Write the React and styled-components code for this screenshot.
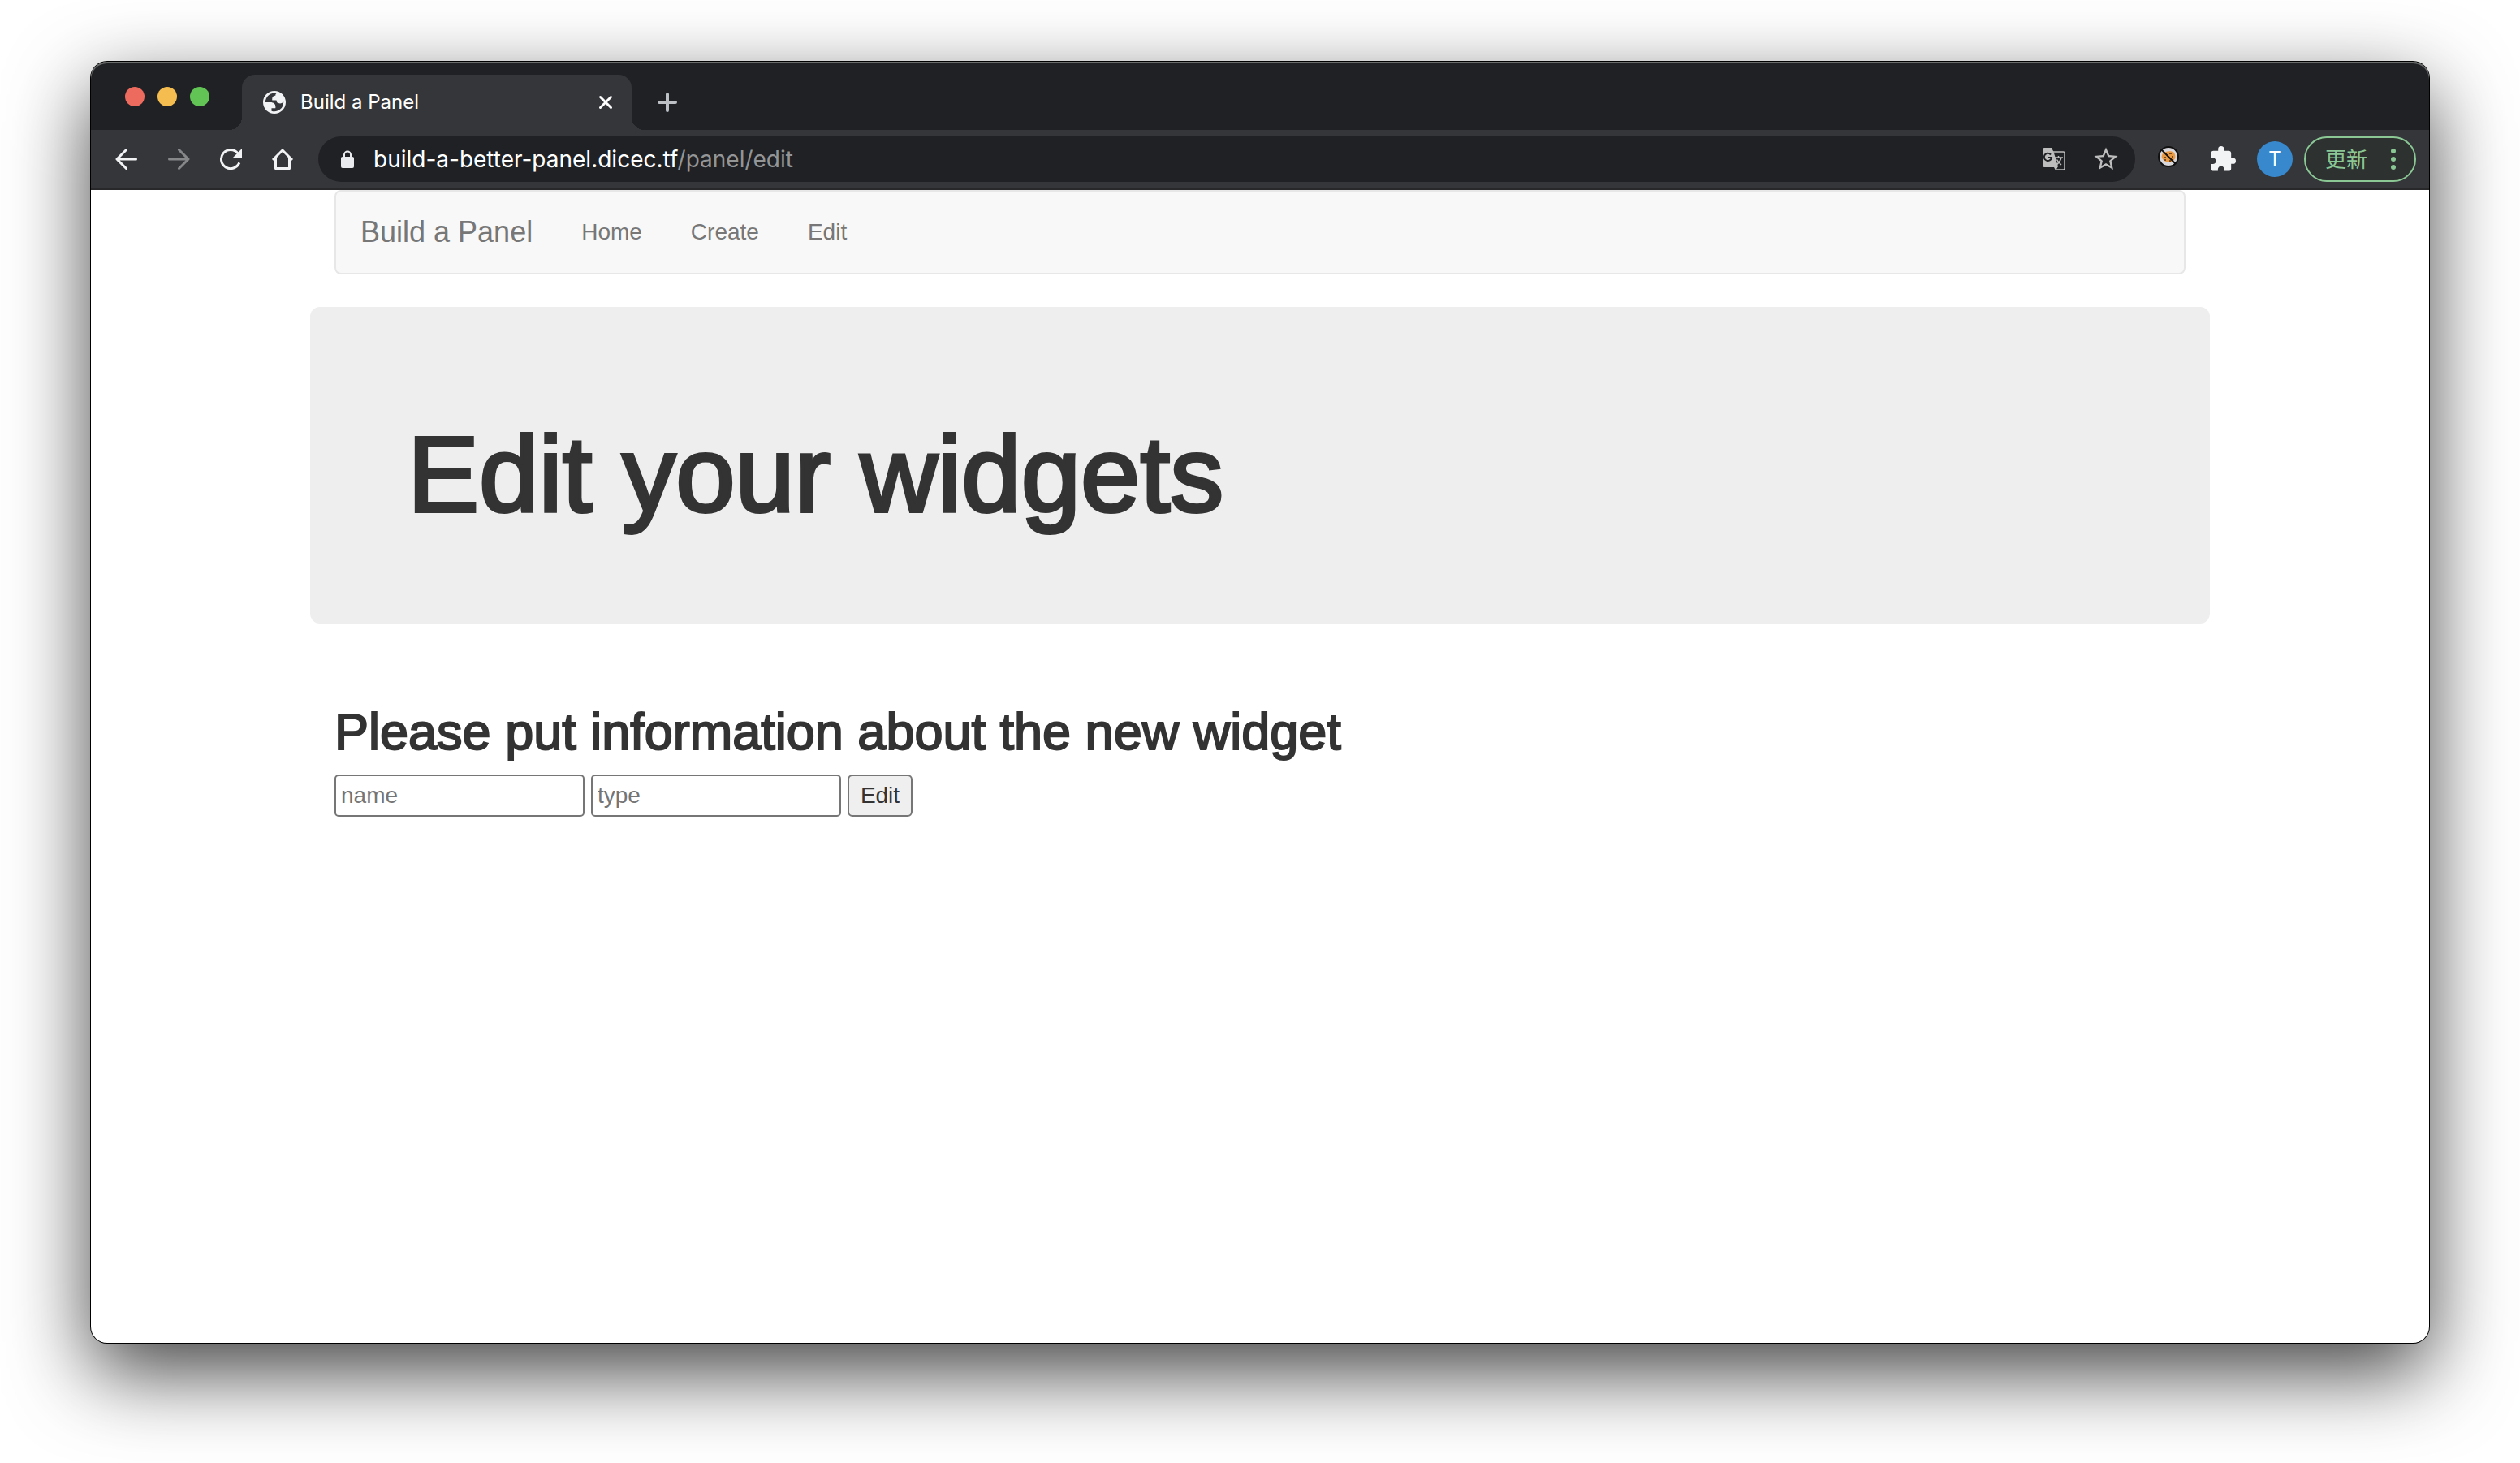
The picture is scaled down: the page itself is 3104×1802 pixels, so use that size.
import React from "react";
import styled, { createGlobalStyle } from "styled-components";

const ui = `Inter, "Noto Sans CJK TC", sans-serif`;
const body = `"Liberation Sans", Arial, sans-serif`;

const GlobalStyle = createGlobalStyle`
  *, *::before, *::after { box-sizing: border-box; }
  body { margin: 0; background: #fff; }
  button { font: inherit; }
`;

const Desktop = styled.div`
  display: flex;
  min-height: 100vh;
  padding: 76px 112px 148px;
`;

const BrowserWindow = styled.div`
  flex: 1;
  display: flex;
  flex-direction: column;
  min-width: 0;
  overflow: hidden;
  border-radius: 20px;
  background: #fff;
  box-shadow: 0 0 0 1px #000, 0 36px 100px rgba(0, 0, 0, 0.74);
`;

const Chrome = styled.header`
  display: flex;
  flex-direction: column;
  border-radius: 20px 20px 0 0;
  border-bottom: 2px solid #28282a;
  background: #35363a;
  font-family: ${ui};
`;

const TabStrip = styled.div`
  display: flex;
  align-items: stretch;
  height: 84px;
  padding: 16px 42px 0;
  border-radius: 20px 20px 0 0;
  background: #202124;
  box-shadow: inset 0 2px 0 #6a6c6b;
`;

const TrafficLights = styled.div`
  display: flex;
  gap: 16px;
  padding-top: 15px;
  margin-right: 40px;
`;

const Light = styled.button`
  width: 24px;
  height: 24px;
  padding: 0;
  border: 0;
  border-radius: 50%;
  background: ${(p) => p.$color};
`;

const Tab = styled.div`
  position: relative;
  display: flex;
  align-items: center;
  width: 480px;
  padding: 0 20px 0 26px;
  border-radius: 16px 16px 0 0;
  background: #35363a;
  color: #fff;
  font-size: 24px;
  line-height: 32px;

  &::before,
  &::after {
    content: "";
    position: absolute;
    bottom: 0;
    width: 16px;
    height: 16px;
  }
  &::before {
    right: 100%;
    background: radial-gradient(circle at 0 0, transparent 16px, #35363a 16px);
  }
  &::after {
    left: 100%;
    background: radial-gradient(circle at 100% 0, transparent 16px, #35363a 16px);
  }
`;

const TabTitle = styled.span`
  flex: 1;
  margin-left: 18px;
`;

const IconButton = styled.button`
  display: flex;
  align-items: center;
  justify-content: center;
  width: ${(p) => p.$size || 24}px;
  height: ${(p) => p.$size || 24}px;
  padding: 0;
  border: 0;
  background: none;
  color: ${(p) => p.$color || "#f1f3f4"};
`;

const NewTab = styled(IconButton)`
  align-self: center;
  margin-left: 32px;
`;

const Toolbar = styled.div`
  display: flex;
  align-items: center;
  height: 72px;
  padding: 0 16px 0 28px;
`;

const NavButtons = styled.div`
  display: flex;
  gap: 32px;
  margin-right: 28px;
`;

const Omnibox = styled.div`
  flex: 1;
  display: flex;
  align-items: center;
  height: 56px;
  min-width: 0;
  padding: 0 20px 0 26px;
  border-radius: 28px;
  background: #202124;
`;

const Address = styled.div`
  flex: 1;
  margin-left: 22px;
  overflow: hidden;
  white-space: nowrap;
  color: #fff;
  font-size: 28px;
  line-height: 40px;
  outline: 0;
`;

const AddressPath = styled.span`
  color: #949597;
`;

const OmniActions = styled.div`
  display: flex;
  gap: 32px;
`;

const Extensions = styled.div`
  display: flex;
  align-items: center;
  gap: 34px;
  margin: 0 26px;
`;

const Avatar = styled.button`
  width: 44px;
  height: 44px;
  padding: 0;
  border: 0;
  border-radius: 50%;
  background: #3788cd;
  color: #fff;
  font-size: 24px;
  line-height: 44px;
`;

const UpdateButton = styled.button`
  display: flex;
  align-items: center;
  justify-content: space-between;
  width: 138px;
  height: 56px;
  margin-left: 14px;
  padding: 2px 22px 0 24px;
  border: 2px solid #8ac795;
  border-radius: 28px;
  background: #2d312f;
  color: #8ac795;
  font-size: 26px;
  line-height: 40px;
`;

const Container = styled.div`
  width: 100%;
  max-width: 2340px;
  margin: 0 auto;
`;

const Gutter = styled.div`
  padding: 0 30px;
`;

const Navbar = styled.nav`
  display: flex;
  align-items: center;
  min-height: 104px;
  margin-bottom: 40px;
  border: 2px solid #e7e7e7;
  border-radius: 8px;
  background: #f8f8f8;
`;

const NavLink = styled.a`
  padding: 30px;
  color: #777;
  font-size: ${(p) => (p.$brand ? 36 : 28)}px;
  line-height: 40px;
  text-decoration: none;
`;

const Jumbotron = styled.section`
  margin-bottom: 100px;
  padding: 96px 120px;
  border-radius: 12px;
  background: #eee;
`;

const Title = styled.h1`
  margin: 42px 0 18px;
  font-size: 132px;
  font-weight: 400;
  line-height: 138px;
  -webkit-text-stroke: 4px currentColor;
`;

const Subtitle = styled.h2`
  margin: 0 0 20px;
  font-size: 63px;
  font-weight: 400;
  line-height: 66px;
  -webkit-text-stroke: 2px currentColor;
`;

const Page = styled.main`
  color: #333;
  font-family: ${body};
`;

const Form = styled.form`
  display: flex;
  gap: 8px;
`;

const TextField = styled.input`
  width: 308px;
  height: 52px;
  padding: 2px 6px;
  border: 2px solid #767676;
  border-radius: 5px;
  background: #fff;
  color: #333;
  font: 28px/40px ${body};

  &::placeholder { color: #757575; opacity: 1; }
`;

const Submit = styled.button`
  width: 80px;
  height: 52px;
  padding: 0;
  border: 2px solid #767676;
  border-radius: 6px;
  background: #efefef;
  color: #333;
  font-size: 28px;
  line-height: 40px;
`;

const Globe = () => (
  <svg width="28" height="28" viewBox="2 2 20 20" fill="#f1f3f4" fillRule="evenodd" aria-hidden="true">
    <path d="M12 2C6.480 2 2 6.480 2 12s4.480 10 10 10 10-4.480 10-10S17.520 2 12 2zM4 12h4.400c3.407.022 4.922 1.730 4.543 5.127H9.488v2.470a8.004 8.004 0 0 0 10.498-8.083C19.327 12.504 18.332 13 17 13c-2.137 0-3.206-.916-3.206-2.750h-3.748c-.274-2.728.683-4.092 2.870-4.092 0-.975.327-1.597.811-1.970A8.004 8.004 0 0 0 4 12z" />
  </svg>
);
const Close = () => (
  <svg width="18" height="18" viewBox="0 0 18 18" stroke="#fff" strokeWidth="3" strokeLinecap="round" aria-hidden="true">
    <path d="M2.500 2.500l13 13M15.500 2.500l-13 13" />
  </svg>
);
const Plus = () => (
  <svg width="24" height="24" viewBox="0 0 24 24" stroke="currentColor" strokeWidth="4" strokeLinecap="round" aria-hidden="true">
    <path d="M12 2v20M2 12h20" />
  </svg>
);
const Arrow = ({ flip }) => (
  <svg width="28" height="28" viewBox="0 0 28 28" fill="none" stroke="currentColor" strokeWidth="3" strokeLinecap="round" strokeLinejoin="round" aria-hidden="true">
    <path d={flip ? "M2.500 14h23M14.500 2.500L26 14 14.500 25.500" : "M25.500 14h-23M13.500 2.500L2 14l11.500 11.500"} />
  </svg>
);
const Reload = () => (
  <svg width="32" height="28" viewBox="0 0 32 28" fill="none" aria-hidden="true">
    <path d="M26.800 18.400A11.600 11.600 0 1 1 25 6.600" stroke="currentColor" strokeWidth="3" />
    <path d="M30 1v11H19z" fill="currentColor" />
  </svg>
);
const Home = () => (
  <svg width="28" height="28" viewBox="0 0 28 28" fill="none" stroke="currentColor" strokeWidth="3" strokeLinejoin="round" aria-hidden="true">
    <path d="M2 15L14 3l12 12M5.500 13v12.500h17V13" />
  </svg>
);
const Lock = () => (
  <svg width="20" height="24" viewBox="0 0 20 24" aria-hidden="true">
    <rect x="2" y="9" width="16" height="14" rx="2" fill="#e8eaed" />
    <path d="M6 9V6.500a4 4 0 0 1 8 0V9" fill="none" stroke="#e8eaed" strokeWidth="2" />
  </svg>
);
const Translate = () => (
  <svg width="28" height="28" viewBox="0 0 28 28" aria-hidden="true">
    <path d="M12 5h13.500A1.500 1.500 0 0 1 27 6.500v19a1.500 1.500 0 0 1-1.500 1.500H16" fill="none" stroke="#bdbdbd" strokeWidth="1.500" />
    <path d="M2 0h9l2.500 5 5.500 18-3 5-2-4H2a2 2 0 0 1-2-2V2a2 2 0 0 1 2-2z" fill="#bdbdbd" />
    <path d="M10 8.500A4.600 4.600 0 1 0 11 12H7" fill="none" stroke="#202124" strokeWidth="2" />
    <path d="M15 12h10M19.500 10v2M23 12c-1 4-3.500 7-6 9M17.500 14.500c1 2 3 4.500 5.500 6.500" fill="none" stroke="#bdbdbd" strokeWidth="1.500" />
  </svg>
);
const Star = () => (
  <svg width="32" height="32" viewBox="1 1 22 22" fill="currentColor" aria-hidden="true">
    <path d="M22 9.240l-7.190-.620L12 2 9.190 8.630 2 9.240l5.460 4.730L5.820 21 12 17.270 18.180 21l-1.630-7.030L22 9.240zM12 15.400l-3.760 2.270 1-4.280-3.320-2.880 4.380-.380L12 6.100l1.710 4.040 4.380.380-3.320 2.880 1 4.280L12 15.400z" />
  </svg>
);
const Cookie = () => (
  <svg width="32" height="32" viewBox="0 0 32 32" aria-hidden="true">
    <circle cx="15" cy="13" r="12" fill="#d8d8dc" stroke="#111" strokeWidth="2" />
    <path d="M8 9c3-3 11-4 14-1 2 4 2 7-1 10-3 2-8 2-11 0-4-3-4-6-2-9z" fill="#eb9a44" />
    <path d="M9 14h3M16 9h3M19 13h2M10 17h2M16 18h2" stroke="#7a4a1c" strokeWidth="2" />
    <path d="M6.500 4.500l17 17" stroke="#111" strokeWidth="2" />
  </svg>
);
const Puzzle = () => (
  <svg width="32" height="32" viewBox="1 1 22 22" fill="currentColor" aria-hidden="true">
    <path d="M20.500 11H19V7c0-1.100-.900-2-2-2h-4V3.500a2.500 2.500 0 0 0-5 0V5H4c-1.100 0-1.990.900-1.990 2v3.800H3.500c1.490 0 2.700 1.210 2.700 2.700s-1.210 2.700-2.700 2.700H2V20c0 1.100.900 2 2 2h3.800v-1.500c0-1.490 1.210-2.700 2.700-2.700s2.700 1.210 2.700 2.700V22H17c1.100 0 2-.900 2-2v-4h1.500a2.500 2.500 0 0 0 0-5z" />
  </svg>
);
const Dots = () => (
  <svg width="8" height="28" viewBox="0 0 8 28" fill="currentColor" aria-hidden="true">
    <circle cx="4" cy="3" r="3" />
    <circle cx="4" cy="13" r="3" />
    <circle cx="4" cy="23" r="3" />
  </svg>
);

export default function App() {
  return (
    <Desktop>
      <GlobalStyle />
      <BrowserWindow>
        <Chrome>
          <TabStrip>
            <TrafficLights>
              <Light $color="#ed6a5e" aria-label="Close window" />
              <Light $color="#f5bd4f" aria-label="Minimize window" />
              <Light $color="#61c454" aria-label="Zoom window" />
            </TrafficLights>
            <Tab>
              <Globe />
              <TabTitle>Build a Panel</TabTitle>
              <IconButton aria-label="Close tab"><Close /></IconButton>
            </Tab>
            <NewTab $color="#bdc1c6" aria-label="New tab"><Plus /></NewTab>
          </TabStrip>
          <Toolbar>
            <NavButtons>
              <IconButton $size={32} aria-label="Back"><Arrow /></IconButton>
              <IconButton $size={32} $color="#868789" aria-label="Forward"><Arrow flip /></IconButton>
              <IconButton $size={32} aria-label="Reload"><Reload /></IconButton>
              <IconButton $size={32} aria-label="Home"><Home /></IconButton>
            </NavButtons>
            <Omnibox>
              <Lock />
              <Address role="textbox" aria-label="Address">
                build-a-better-panel.dicec.tf<AddressPath>/panel/edit</AddressPath>
              </Address>
              <OmniActions>
                <IconButton $size={32} aria-label="Translate this page"><Translate /></IconButton>
                <IconButton $size={32} $color="#bdbdbd" aria-label="Bookmark this page"><Star /></IconButton>
              </OmniActions>
            </Omnibox>
            <Extensions>
              <IconButton $size={32} aria-label="Cookie extension"><Cookie /></IconButton>
              <IconButton $size={32} aria-label="Extensions"><Puzzle /></IconButton>
            </Extensions>
            <Avatar aria-label="Profile">T</Avatar>
            <UpdateButton>更新<Dots /></UpdateButton>
          </Toolbar>
        </Chrome>
        <Page>
          <Container>
            <Gutter>
              <Navbar>
                <NavLink href="#" $brand>Build a Panel</NavLink>
                <NavLink href="#home">Home</NavLink>
                <NavLink href="#create">Create</NavLink>
                <NavLink href="#edit">Edit</NavLink>
              </Navbar>
            </Gutter>
            <Jumbotron>
              <Title>Edit your widgets</Title>
            </Jumbotron>
            <Gutter>
              <Subtitle>Please put information about the new widget</Subtitle>
              <Form onSubmit={(e) => e.preventDefault()}>
                <TextField aria-label="name" placeholder="name" />
                <TextField aria-label="type" placeholder="type" />
                <Submit>Edit</Submit>
              </Form>
            </Gutter>
          </Container>
        </Page>
      </BrowserWindow>
    </Desktop>
  );
}
